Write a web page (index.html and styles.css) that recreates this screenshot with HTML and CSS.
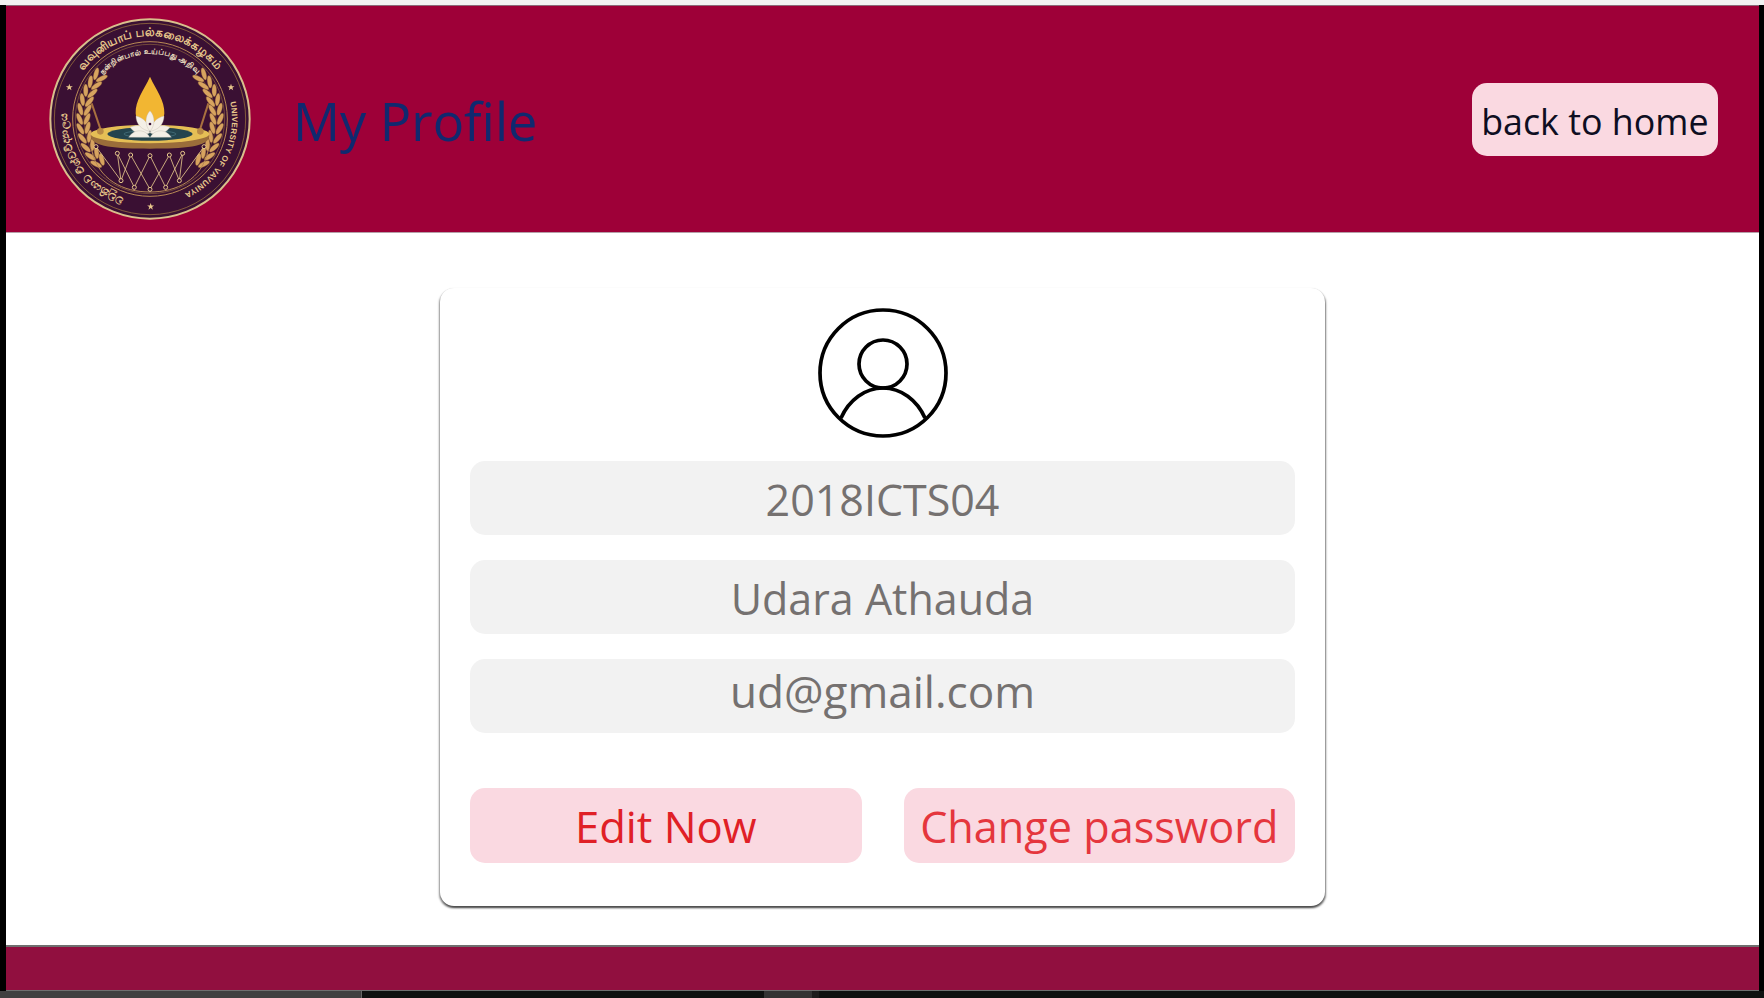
FILE: index.html
```html
<!DOCTYPE html>
<html lang="en">
<head>
<meta charset="utf-8">
<title>My Profile</title>
<link rel="stylesheet" href="styles.css">
</head>
<body>
<div class="top-strip"></div>
<div class="frame">
  <header class="header">
    <svg class="logo" viewBox="0 0 660 660" role="img" aria-label="University of Vavuniya emblem">
      <defs>
        <path id="arc-right" d="M 570.6 275.9 A 246 246 0 0 1 372.7 569"/>
        <path id="arc-top" d="M 85.8 284 A 248 248 0 0 1 574.2 284"/>
        <path id="arc-inner" d="M 138 293 A 195 195 0 0 1 522 293"/>
        <path id="arc-left" d="M 253 563 A 248 248 0 0 1 86 284"/>
        <polygon id="star" points="0,-11 2.6,-3.4 10.5,-3.4 4.2,1.3 6.5,8.9 0,4.2 -6.5,8.9 -4.2,1.3 -10.5,-3.4 -2.6,-3.4"/>
        <g id="leaf">
          <ellipse cx="330" cy="116" rx="19" ry="7" transform="rotate(-24 330 116)"/>
          <ellipse cx="330" cy="138" rx="19" ry="7" transform="rotate(24 330 138)"/>
        </g>
        <g id="wreath">
          <path d="M175 205 A200 200 0 0 0 170 447" fill="none" stroke="#7a5230" stroke-width="2"/>
          <use href="#leaf" transform="rotate(-50 330 327)"/>
          <use href="#leaf" transform="rotate(-58 330 327)"/>
          <use href="#leaf" transform="rotate(-66 330 327)"/>
          <use href="#leaf" transform="rotate(-74 330 327)"/>
          <use href="#leaf" transform="rotate(-82 330 327)"/>
          <use href="#leaf" transform="rotate(-90 330 327)"/>
          <use href="#leaf" transform="rotate(-98 330 327)"/>
          <use href="#leaf" transform="rotate(-106 330 327)"/>
          <use href="#leaf" transform="rotate(-114 330 327)"/>
          <use href="#leaf" transform="rotate(-122 330 327)"/>
          <use href="#leaf" transform="rotate(-130 330 327)"/>
        </g>
      </defs>
      <circle cx="330" cy="327" r="299" fill="#3a1033" stroke="#d9bf8c" stroke-width="6"/>
      <circle cx="330" cy="327" r="287" fill="none" stroke="#a9803f" stroke-width="2"/>
      <circle cx="330" cy="327" r="232" fill="none" stroke="#b98a55" stroke-width="3"/>
      <circle cx="330" cy="327" r="224" fill="none" stroke="#8e6540" stroke-width="2"/>
      <g class="logo-text">
        <text class="logo-latin"><textPath href="#arc-right">UNIVERSITY OF VAVUNIYA</textPath></text>
        <text class="logo-tamil logo-centered"><textPath href="#arc-top" startOffset="50%">வவுனியாப் பல்கலைக்கழகம்</textPath></text>
        <text class="logo-tamil-small logo-centered"><textPath href="#arc-inner" startOffset="50%">நன்றின்பால் உய்ப்பது அறிவு</textPath></text>
        <text class="logo-sinhala"><textPath href="#arc-left">වවුනියාව විශ්වවිද්‍යාලය</textPath></text>
      </g>
      <g fill="#e9c88c">
        <use href="#star" x="88" y="232"/>
        <use href="#star" x="573" y="232"/>
        <use href="#star" x="332" y="590"/>
      </g>
      <g fill="#d7a35f" stroke="#7a5230" stroke-width="1">
        <use href="#wreath"/>
        <use href="#wreath" transform="matrix(-1 0 0 1 660 0)"/>
      </g>
      <path d="M330 200 C312 240 285 272 287 310 C288 338 310 350 330 350 C350 350 372 338 373 310 C375 272 348 240 330 200 Z" fill="#f2b632"/>
      <line x1="155" y1="280" x2="183" y2="362" stroke="#a8703f" stroke-width="6"/>
      <line x1="505" y1="280" x2="479" y2="362" stroke="#a8703f" stroke-width="6"/>
      <path d="M152 376 C152 412 230 416 330 416 C430 416 508 412 508 376 Z" fill="#9a6d3a"/>
      <ellipse cx="330" cy="372" rx="178" ry="28" fill="#e5bf55"/>
      <ellipse cx="330" cy="372" rx="128" ry="20" fill="#24444e"/>
      <ellipse cx="330" cy="372" rx="78" ry="10" fill="none" stroke="#4d7a86" stroke-width="2"/>
      <circle cx="181" cy="364" r="10" fill="#b98a45"/>
      <circle cx="481" cy="364" r="10" fill="#b98a45"/>
      <g fill="#f4efe6" stroke="#b8b0a4" stroke-width="1">
        <path d="M270 352 C296 340 322 350 330 368 C312 378 284 372 270 352 Z"/>
        <path d="M390 352 C364 340 338 350 330 368 C348 378 376 372 390 352 Z"/>
        <path d="M266 382 C284 354 318 358 329 382 Z"/>
        <path d="M394 382 C376 354 342 358 331 382 Z"/>
        <path d="M288 318 C310 322 328 342 330 364 C306 360 288 344 288 318 Z"/>
        <path d="M372 318 C350 322 332 342 330 364 C354 360 372 344 372 318 Z"/>
        <path d="M330 302 C346 320 346 345 330 364 C314 345 314 320 330 302 Z"/>
      </g>
      <circle cx="330" cy="342" r="4" fill="#3a1033"/>
      <path d="M155 420 C175 510 250 546 330 546 C410 546 485 510 505 420" fill="none" stroke="#b98a55" stroke-width="3"/>
      <g fill="none" stroke="#e6c88c" stroke-width="2.5">
        <path d="M168 410 L243 512 L272 435 L330 538 L388 435 L418 512 L492 410"/>
        <path d="M232 430 L283 532 L330 437 L377 532 L428 430"/>
        <path d="M232 430 L243 512 M428 430 L418 512"/>
      </g>
      <g fill="#3a1033" stroke="#e6c88c" stroke-width="3">
        <circle cx="168" cy="410" r="6"/><circle cx="232" cy="430" r="6"/><circle cx="272" cy="435" r="6"/>
        <circle cx="330" cy="437" r="6"/><circle cx="388" cy="435" r="6"/><circle cx="428" cy="430" r="6"/>
        <circle cx="492" cy="410" r="6"/><circle cx="243" cy="512" r="6"/><circle cx="283" cy="532" r="6"/>
        <circle cx="330" cy="538" r="6"/><circle cx="377" cy="532" r="6"/><circle cx="418" cy="512" r="6"/>
      </g>
    </svg>
    <h1 class="title">My Profile</h1>
    <a class="home-link" href="#">back to home</a>
  </header>
  <main class="main">
    <section class="card">
      <svg class="avatar" viewBox="0 0 130 130" aria-hidden="true">
        <g fill="none" stroke="#000" stroke-width="3.7">
          <circle cx="65" cy="65" r="63"/>
          <circle cx="65" cy="56" r="24"/>
          <path d="M23 110 C31 92 47 80 65 80 C83 80 99 92 107 110"/>
        </g>
      </svg>
      <div class="field field-id">2018ICTS04</div>
      <div class="field field-name">Udara Athauda</div>
      <div class="field field-mail">ud@gmail.com</div>
      <div class="actions">
        <button class="action action-edit" type="button">Edit Now</button>
        <button class="action action-pass" type="button">Change password</button>
      </div>
    </section>
  </main>
  <footer class="footer"></footer>
</div>
<div class="taskbar">
  <span class="scroll-thumb"></span>
  <span class="task-gap"></span>
  <span class="task-mark"></span>
</div>
</body>
</html>
```

FILE: styles.css
```css
* { box-sizing: border-box; }
html, body { margin: 0; height: 100%; }
body {
  width: 1764px;
  height: 998px;
  overflow: hidden;
  display: flex;
  flex-direction: column;
  background: #000;
  font-family: "Open Sans", "Noto Sans", sans-serif;
}
.top-strip { height: 5px; background: #f2f2f2; flex: none; }
.frame {
  flex: 1;
  min-height: 0;
  margin: 0 5px 0 6px;
  display: flex;
  flex-direction: column;
  background: #fff;
}
.header {
  height: 228px;
  flex: none;
  display: flex;
  align-items: center;
  padding: 0 41px 0 34px;
  background: #9e0038;
  border-top: 1px solid #8a6a78;
  border-bottom: 1px solid #b5a0a8;
}
.logo { width: 220px; height: 220px; flex: none; margin-top: 2px; }
.logo-text { fill: #e9c88c; font-family: "Liberation Sans", "Noto Sans", sans-serif; font-weight: 700; }
.logo-centered { text-anchor: middle; }
.logo-latin { font-size: 24px; letter-spacing: 1px; }
.logo-tamil { font-size: 35px; }
.logo-sinhala { font-size: 32px; }
.logo-tamil-small { font-size: 23px; fill: #f3e4c7; }
.title {
  margin: 4px auto 0 33px;
  font-size: 52.3px;
  font-weight: 400;
  line-height: 1;
  color: #10296f;
}
.home-link {
  padding: 13px 9.5px 9px;
  border-radius: 15px;
  background: #fad9e1;
  color: #0e0e22;
  font-size: 35.8px;
  line-height: 51px;
  text-decoration: none;
  white-space: nowrap;
}
.main {
  flex: 1;
  min-height: 0;
  display: flex;
  justify-content: center;
  align-items: flex-start;
  padding-top: 54.5px;
}
.card {
  width: 885px;
  height: 618px;
  display: flex;
  flex-direction: column;
  align-items: center;
  padding: 20px 30px 0;
  border-radius: 14px;
  background: #fff;
  box-shadow: 1px 2px 2px rgba(0, 0, 0, .5), -1px 2px 2px rgba(0, 0, 0, .4), 0 0 1px rgba(0, 0, 0, .15);
}
.avatar { width: 130px; height: 130px; flex: none; margin-bottom: 23px; }
.field {
  width: 100%;
  height: 74.5px;
  margin-bottom: 24.5px;
  display: flex;
  justify-content: center;
  align-items: center;
  border-radius: 15px;
  background: #f2f2f2;
  color: #757170;
  font-size: 43px;
  white-space: nowrap;
}
.field-id { padding-top: 4px; }
.field-name { padding-top: 4px; }
.field-mail { margin-bottom: 55px; padding-bottom: 10px; font-size: 44.1px; }
.actions { width: 100%; display: flex; justify-content: space-between; }
.action {
  width: 391.5px;
  height: 74.5px;
  padding: 2px 0 0;
  border: 0;
  border-radius: 15px;
  background: #fad9e1;
  font: inherit;
  font-size: 43.6px;
  white-space: nowrap;
}
.action-edit { color: #e02026; }
.action-pass { color: #e5363d; font-size: 43.2px; }
.footer {
  height: 46px;
  flex: none;
  background: #910f3f;
  border-top: 2px solid #6f6f6f;
  border-bottom: 1px solid #6f6f6f;
}
.taskbar {
  height: 7px;
  flex: none;
  display: flex;
  background: #0f1110;
}
.scroll-thumb { width: 362px; background: #404040; border-right: 1px solid #666; }
.task-gap { width: 402px; }
.task-mark { width: 55px; background: #333; border-right: 7px solid #1c1c1c; }
```
